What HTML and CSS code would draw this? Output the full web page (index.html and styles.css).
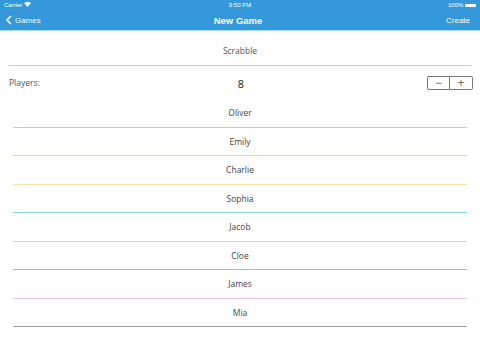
FILE: index.html
```html
<!DOCTYPE html>
<html lang="en">
<head>
    <meta charset="UTF-8">
    <title>New Game</title>
    <link rel="stylesheet" href="styles.css">
</head>
<body>
    <header class="top">
        <div class="status">
            <span class="carrier">Carrier
                <svg width="7" height="5" viewBox="0 0 10 7"><path d="M5 7 L0 1.5 Q5 -2 10 1.5 Z" fill="#fff"/></svg>
            </span>
            <span class="time">9:50 PM</span>
            <span class="battery">100% <i class="bat"></i></span>
        </div>
        <nav class="navbar">
            <a class="back">
                <svg width="6" height="10" viewBox="0 0 6 10"><path d="M5 1 L1 5 L5 9" stroke="#fff" stroke-width="1.6" fill="none"/></svg>
                Games
            </a>
            <h1>New Game</h1>
            <a class="create">Create</a>
        </nav>
    </header>
    <main class="content">
        <div class="game">Scrabble</div>
        <div class="players">
            <span class="label">Players:</span>
            <span class="count">8</span>
            <div class="stepper">
                <button>&minus;</button>
                <button>+</button>
            </div>
        </div>
        <ul class="names">
            <li class="c1">Oliver</li>
            <li class="c2">Emily</li>
            <li class="c3">Charlie</li>
            <li class="c4">Sophia</li>
            <li class="c5">Jacob</li>
            <li class="c6">Cloe</li>
            <li class="c7">James</li>
            <li class="c8">Mia</li>
        </ul>
    </main>
</body>
</html>
```

FILE: styles.css
```css
body{
    margin: 0;
    background: #fff;
    font-family: "Open Sans", sans-serif;
    color: #555;
}
.top{
    background-color: #3498db;
    color: #fff;
    font-family: "Liberation Sans", Arial, sans-serif;
    border-bottom: 1px solid #a9d8f5;
}
.status{
    height: 10px;
    display: flex;
    justify-content: space-between;
    align-items: center;
    padding: 0 4px;
    font-size: 6px;
}
.status span{
    flex: 1;
}
.status .time{
    text-align: center;
}
.status .battery{
    text-align: right;
}
.bat{
    display: inline-block;
    width: 11px;
    height: 3px;
    background: #fff;
    border-radius: 1px;
    vertical-align: middle;
}
.navbar{
    height: 20px;
    display: flex;
    align-items: center;
    justify-content: space-between;
    padding: 0 10px 0 6px;
}
.navbar h1{
    font-size: 9.5px;
    font-weight: bold;
    margin: 0;
    flex: 1;
    text-align: center;
}
.navbar a{
    font-size: 8px;
    flex: 1;
    display: flex;
    align-items: center;
    gap: 3px;
}
.navbar .create{
    justify-content: flex-end;
}
.content{
    padding: 0 9px;
}
.game{
    font-size: 8.5px;
    text-align: center;
    height: 34px;
    line-height: 40px;
    border-bottom: 1px solid #ccc;
}
.players{
    height: 33px;
    display: flex;
    align-items: center;
    font-size: 8.5px;
}
.players .label{
    flex: 1;
}
.players .count{
    flex: 1;
    text-align: center;
    font-size: 11px;
    color: #222;
    margin-top: 1px;
}
.stepper{
    flex: 1;
    display: flex;
    justify-content: flex-end;
    margin-right: -2px;
}
.stepper button{
    width: 23px;
    height: 14px;
    padding: 0;
    background: #fff;
    border: 1px solid #777;
    font-family: "Liberation Sans", Arial, sans-serif;
    font-size: 12px;
    line-height: 10px;
    color: #666;
}
.stepper button:first-child{
    border-radius: 2px 0 0 2px;
}
.stepper button:last-child{
    border-left: none;
    border-radius: 0 2px 2px 0;
}
.names{
    list-style: none;
    margin: 0;
    padding: 0 4px;
}
.names li{
    height: 27.5px;
    line-height: 28px;
    text-align: center;
    font-size: 8.5px;
    color: #444;
    border-bottom: 1px solid #ccc;
}
.names .c1{ border-color: #f3b9b0; }
.names .c2{ border-color: #f1d58e; }
.names .c3{ border-color: #f8e3a6; }
.names .c4{ border-color: #8fd6cf; }
.names .c5{ border-color: #bedbe3; }
.names .c6{ border-color: #c9a7d9; }
.names .c7{ border-color: #f2c6ea; }
.names .c8{ border-color: #9e9e9e; }
```
